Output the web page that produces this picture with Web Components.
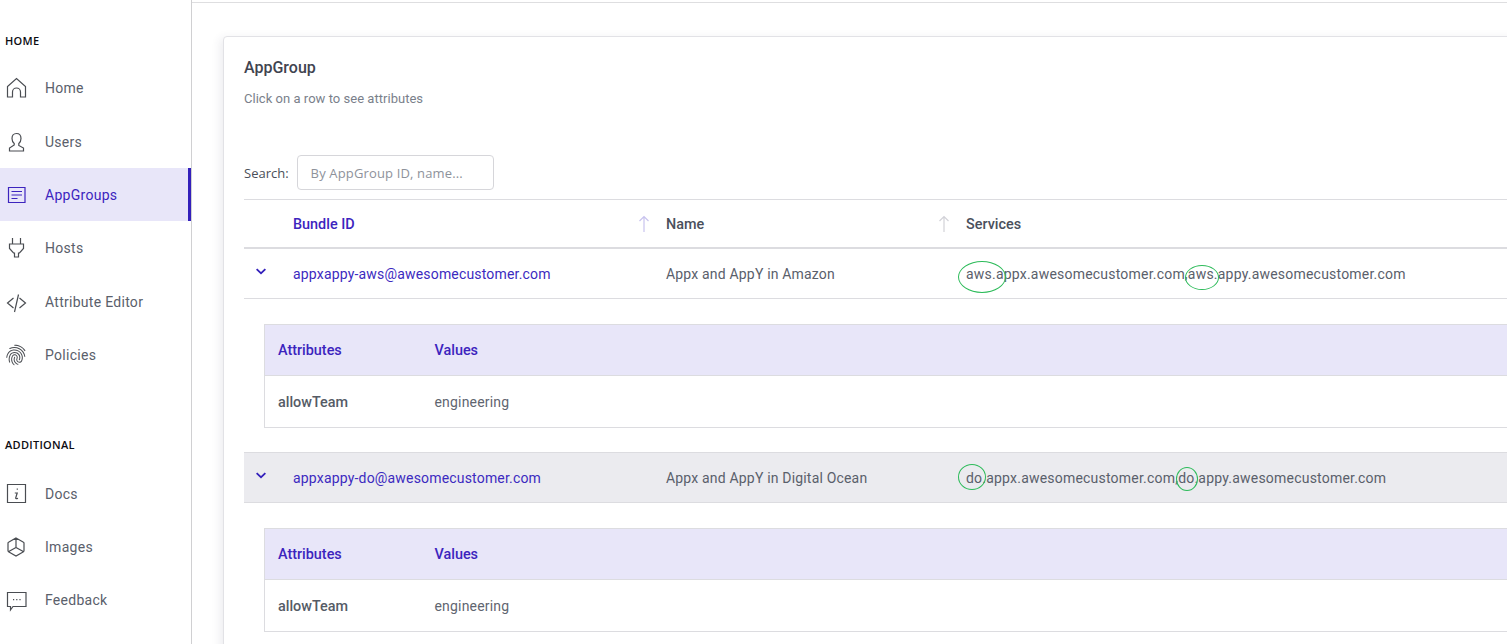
<!DOCTYPE html>
<html>
<head>
<meta charset="utf-8">
<title>AppGroup</title>
<style>
  html, body { margin: 0; height: 100%; overflow: hidden; background: #fff; }
  body { font-family: Roboto, "Liberation Sans", sans-serif; }
</style>
</head>
<body>
<app-shell>
  <side-nav slot="nav">
    <nav-heading>HOME</nav-heading>
    <nav-item>
      <svg slot="icon" viewBox="0 0 24 24"><path d="M3.500 21V10.500L12.500 2.500 21.500 10.500V21H16.500V16a4 4 0 0 0-8 0V21Z"/></svg>
      Home
    </nav-item>
    <nav-item>
      <svg slot="icon" viewBox="0 0 24 24"><path d="M12.500 3.500c-3 0-4.500 2.300-4.500 5 0 2.200 1 4 2.200 5v1.500L5.500 18v3h14v-3l-4.700-2.500V13.500c1.200-1 2.200-2.800 2.200-5 0-2.700-1.500-5-4.500-5z"/></svg>
      Users
    </nav-item>
    <nav-item active>
      <svg slot="icon" viewBox="0 0 24 24"><path d="M4.500 4.500h16.500v15H4.500zM7.500 8.500h10.500M7.500 12h10.500M7.500 15.500h6"/></svg>
      AppGroups
    </nav-item>
    <nav-item>
      <svg slot="icon" viewBox="0 0 24 24"><path d="M8.500 2v6M16.500 2v6M5.500 8h14v4.500l-4 4.500h-1v4h-4v-4h-1l-4-4.500z"/></svg>
      Hosts
    </nav-item>
    <nav-item>
      <svg slot="icon" viewBox="0 0 24 24"><path d="M9.500 8l-6 5 6 5M15.500 8l6 5-6 5M14.500 4.500l-4 17.500"/></svg>
      Attribute Editor
    </nav-item>
    <nav-item>
      <svg slot="icon" viewBox="0 0 24 24"><g transform="rotate(28 12 12)"><path class="fill" d="M17.810 4.470c-.080 0-.160-.020-.230-.060C15.660 3.420 14 3 12.010 3c-1.980 0-3.860.470-5.580 1.410-.240.130-.540.040-.680-.200-.130-.240-.040-.550.200-.680C7.820 2.520 9.860 2 12.010 2c2.130 0 3.990.470 6.030 1.520.250.130.340.430.210.670-.090.180-.260.280-.440.280zM3.500 9.720c-.100 0-.200-.030-.290-.090-.230-.160-.280-.470-.120-.700.990-1.400 2.250-2.500 3.750-3.270C9.980 4.040 14 4.030 17.150 5.650c1.500.770 2.760 1.860 3.750 3.250.160.220.110.540-.120.700-.230.160-.540.110-.700-.120-.900-1.260-2.040-2.250-3.390-2.940-2.870-1.470-6.540-1.470-9.400.010-1.360.700-2.500 1.700-3.400 2.960-.080.140-.230.210-.390.210zm6.250 12.070c-.130 0-.260-.050-.350-.150-.870-.870-1.340-1.430-2.010-2.640-.690-1.230-1.050-2.730-1.050-4.340 0-2.970 2.540-5.390 5.660-5.390s5.660 2.420 5.660 5.390c0 .280-.220.500-.500.500s-.500-.220-.500-.500c0-2.420-2.090-4.390-4.660-4.390-2.570 0-4.660 1.970-4.660 4.390 0 1.440.320 2.770.930 3.850.640 1.150 1.080 1.640 1.850 2.420.190.200.190.510 0 .710-.110.100-.240.150-.370.150zm7.170-1.850c-1.190 0-2.240-.300-3.100-.890-1.490-1.010-2.380-2.650-2.380-4.390 0-.280.220-.500.500-.500s.500.220.500.500c0 1.410.720 2.740 1.940 3.560.710.480 1.540.710 2.540.710.240 0 .640-.030 1.040-.100.270-.050.530.130.580.410.050.270-.130.530-.410.580-.570.110-1.070.120-1.210.120zM14.910 22c-.040 0-.090-.010-.130-.020-1.590-.440-2.630-1.030-3.720-2.100-1.400-1.390-2.170-3.240-2.170-5.220 0-1.620 1.380-2.940 3.080-2.940 1.700 0 3.080 1.320 3.080 2.940 0 1.070.930 1.940 2.080 1.940s2.080-.870 2.080-1.940c0-3.770-3.250-6.830-7.250-6.830-2.840 0-5.440 1.580-6.610 4.030-.390.810-.590 1.760-.590 2.800 0 .780.070 2.010.670 3.610.100.260-.030.550-.290.640-.260.100-.550-.040-.640-.290-.490-1.310-.730-2.610-.730-3.960 0-1.200.230-2.290.680-3.240 1.330-2.790 4.280-4.600 7.510-4.600 4.550 0 8.250 3.510 8.250 7.830 0 1.620-1.380 2.940-3.080 2.940s-3.080-1.320-3.080-2.940c0-1.070-.930-1.940-2.080-1.940s-2.080.870-2.080 1.940c0 1.710.660 3.310 1.870 4.510.950.940 1.860 1.460 3.270 1.850.270.070.420.350.350.610-.050.230-.260.380-.470.380z"/></g></svg>
      Policies
    </nav-item>
    <nav-heading second>ADDITIONAL</nav-heading>
    <nav-item>
      <svg slot="icon" viewBox="0 0 24 24"><path d="M3.500 2.500h18v18h-18zM13.300 6.500v1.200M10.800 11h2.400l-1.500 5c-.200.800.800 1 2.300.200"/></svg>
      Docs
    </nav-item>
    <nav-item>
      <svg slot="icon" viewBox="0 0 24 24"><path d="M12 3l7.500 4.300c.400.200.500.500.500.900v7.600c0 .400-.100.700-.500.900L12 21l-7.500-4.300c-.400-.200-.500-.500-.500-.900V8.200c0-.400.100-.700.500-.900zM12 3v9.500M12 12.500l-7.700 4.300M12 12.500l7.700 4.300"/></svg>
      Images
    </nav-item>
    <nav-item>
      <svg slot="icon" viewBox="0 0 24 24"><path d="M3.500 4.500h18.500v14h-13l-2.500 3.500v-3.500h-3z"/><path class="fill" d="M9 11h1.200v1.200H9zM12.200 11h1.200v1.200h-1.200zM15.400 11h1.200v1.200h-1.200z"/></svg>
      Feedback
    </nav-item>
  </side-nav>

  <app-card heading="AppGroup" note="Click on a row to see attributes">
    <search-box label="Search:" placeholder="By AppGroup ID, name..."></search-box>
    <table-head></table-head>

    <group-row bundle="appxappy-aws@awesomecustomer.com" name="Appx and AppY in Amazon">
      <ring-mark style="--l:-8px;--t:-3px;--w:48px;--h:32px">aws.</ring-mark>appx.awesomecustomer.com,<ring-mark style="--l:-3px;--t:1px;--w:34px;--h:25px">aws.</ring-mark>appy.awesomecustomer.com
    </group-row>
    <attr-panel attr="allowTeam" value="engineering"></attr-panel>

    <group-row hover bundle="appxappy-do@awesomecustomer.com" name="Appx and AppY in Digital Ocean">
      <ring-mark style="--l:-8px;--t:-4px;--w:28px;--h:26px">do.</ring-mark>appx.awesomecustomer.com,<ring-mark style="--l:-2px;--t:-1px;--w:22px;--h:24px">do.</ring-mark>appy.awesomecustomer.com
    </group-row>
    <attr-panel attr="allowTeam" value="engineering"></attr-panel>
  </app-card>
</app-shell>

<script>
class AppShell extends HTMLElement {
  constructor() {
    super();
    this.attachShadow({ mode: "open" });
    this.shadowRoot.innerHTML = `
    <style>
      :host { display: flex; height: 644px; overflow: hidden; }
      .nav { display: block; flex: 0 0 192px; }
      main {
        flex: 1;
        min-width: 0;
        margin-top: 2px;
        border-top: 1px solid #dedee0;
        padding: 33px 0 0 31px;
        overflow: hidden;
      }
    </style>
    <div class="nav"><slot name="nav"></slot></div>
    <main><slot></slot></main>`;
  }
}

class SideNav extends HTMLElement {
  constructor() {
    super();
    this.attachShadow({ mode: "open" });
    this.shadowRoot.innerHTML = `
    <style>
      :host {
        display: block;
        box-sizing: border-box;
        width: 192px;
        height: 644px;
        border-right: 1px solid #d0d0d2;
        padding-top: 34px;
      }
    </style>
    <slot></slot>`;
  }
}

class NavHeading extends HTMLElement {
  constructor() {
    super();
    this.attachShadow({ mode: "open" });
    this.shadowRoot.innerHTML = `
    <style>
      :host {
        display: block;
        height: 14px;
        padding: 0 0 0 5px;
        margin-bottom: 13px;
        font: 600 11px/14px "Open Sans", sans-serif;
        letter-spacing: .3px;
        color: #0c0c12;
      }
      :host([second]) { margin-top: 57px; margin-bottom: 14px; }
    </style>
    <slot></slot>`;
  }
}

class NavItem extends HTMLElement {
  constructor() {
    super();
    this.attachShadow({ mode: "open" });
    this.shadowRoot.innerHTML = `
    <style>
      :host {
        display: flex;
        align-items: center;
        gap: 17px;
        box-sizing: border-box;
        height: 53.400px;
        padding: 1px 0 0 4px;
        font: 400 14px/20px Roboto, sans-serif;
        letter-spacing: .28px;
        color: #5a606b;
      }
      :host([active]) {
        background: #e8e6f9;
        color: #3c24be;
        border-right: 3px solid #3320bb;
      }
      ::slotted(svg) {
        flex: none;
        width: 24px;
        height: 24px;
        fill: none;
        stroke: #4a4d52;
        stroke-width: 1.200;
      }
      :host([active]) ::slotted(svg) { stroke: #3c24be; }
    </style>
    <slot name="icon"></slot>
    <span><slot></slot></span>`;
  }

  connectedCallback() {
    // the filled bits of an icon are marked with .fill, the rest is outline
    this.querySelectorAll(".fill").forEach(p => {
      p.setAttribute("fill", "#4a4d52");
      p.setAttribute("stroke", "none");
    });
  }
}

class AppCard extends HTMLElement {
  constructor() {
    super();
    this.attachShadow({ mode: "open" });
  }

  connectedCallback() {
    this.shadowRoot.innerHTML = `
    <style>
      :host {
        display: block;
        box-sizing: border-box;
        width: 1400px;
        height: 900px;
        padding: 21px 20px;
        background: #fff;
        border: 1px solid #e2e2e6;
        border-radius: 4px;
        box-shadow: -3px 2px 10px rgba(60, 60, 90, .09);
      }
      h2 {
        margin: 0;
        font: 500 16px/20px Roboto, sans-serif;
        color: #3f4450;
      }
      p {
        margin: 12px 0 0;
        font: 400 13px/18px Roboto, sans-serif;
        letter-spacing: .03px;
        color: #7a7f8b;
      }
      .body { margin-top: 47px; width: 1263px; }
    </style>
    <h2>${this.getAttribute("heading")}</h2>
    <p>${this.getAttribute("note")}</p>
    <div class="body"><slot></slot></div>`;
  }
}

class SearchBox extends HTMLElement {
  constructor() {
    super();
    this.attachShadow({ mode: "open" });
  }

  connectedCallback() {
    this.shadowRoot.innerHTML = `
    <style>
      :host {
        display: flex;
        align-items: center;
        gap: 8px;
        height: 35px;
        margin-bottom: 9px;
        font: 400 13px/18px "Open Sans", sans-serif;
        color: #4a4f59;
      }
      input {
        box-sizing: border-box;
        width: 197px;
        height: 35px;
        padding: 0 13px;
        border: 1px solid #d6d6da;
        border-radius: 4px;
        font: inherit;
        letter-spacing: .15px;
        outline: none;
      }
      input::placeholder { color: #8e929b; opacity: 1; }
    </style>
    <span>${this.getAttribute("label")}</span>
    <input placeholder="${this.getAttribute("placeholder")}">`;
  }
}

// shared columns of the head and the rows
const rowColumns = "49px 373px 299px 1fr";

class TableHead extends HTMLElement {
  constructor() {
    super();
    this.attachShadow({ mode: "open" });
    this.shadowRoot.innerHTML = `
    <style>
      :host {
        display: grid;
        grid-template-columns: ${rowColumns};
        align-items: center;
        box-sizing: border-box;
        height: 50px;
        padding-top: 2px;
        border-top: 1px solid #dcdce0;
        border-bottom: 2px solid #dcdce0;
        font: 500 14.400px/20px Roboto, sans-serif;
        color: #4a505c;
      }
      .cell { display: flex; align-items: center; justify-content: space-between; padding-right: 15px; }
      .name { padding-right: 14px; }
      .svc { padding-left: 1px; }
      .sel { color: #3c24be; }
      svg { width: 14px; height: 18px; margin-top: -2px; fill: none; stroke: #d2d2d8; stroke-width: 1.200; }
      .sel svg { stroke: #c8c3ee; }
    </style>
    <span></span>
    <div class="cell sel">Bundle ID
      <svg viewBox="0 0 14 18"><path d="M7 17V1.500M2.500 6L7 1.500 11.500 6"/></svg>
    </div>
    <div class="cell name">Name
      <svg viewBox="0 0 14 18"><path d="M7 17V1.500M2.500 6L7 1.500 11.500 6"/></svg>
    </div>
    <div class="cell svc">Services</div>`;
  }
}

class GroupRow extends HTMLElement {
  constructor() {
    super();
    this.attachShadow({ mode: "open" });
  }

  connectedCallback() {
    this.shadowRoot.innerHTML = `
    <style>
      :host {
        display: grid;
        grid-template-columns: ${rowColumns};
        align-items: center;
        box-sizing: border-box;
        height: 50px;
        padding-top: 1px;
        border-bottom: 1px solid #dcdce0;
        font: 400 14px/20px Roboto, sans-serif;
        letter-spacing: .18px;
        color: #5a606b;
      }
      :host([hover]) { background: #ebebef; border-top: 1px solid #dcdce0; height: 51px; }
      svg { width: 10px; height: 7px; margin: 0 0 6px 12px; fill: #3320bb; }
      .id { color: #3c2ac0; }
      .svc { white-space: nowrap; padding-left: 1px; letter-spacing: .21px; }
    </style>
    <svg viewBox="0 0 12 8"><path d="M1.500 0.500L6 4.500 10.500 0.500 12 2 6 7.500 0 2z"/></svg>
    <span class="id">${this.getAttribute("bundle")}</span>
    <span>${this.getAttribute("name")}</span>
    <span class="svc"><slot></slot></span>`;
  }
}

class RingMark extends HTMLElement {
  constructor() {
    super();
    this.attachShadow({ mode: "open" });
    this.shadowRoot.innerHTML = `
    <style>
      :host { display: inline-block; position: relative; }
      i {
        position: absolute;
        left: var(--l);
        top: var(--t);
        width: var(--w);
        height: var(--h);
        box-sizing: border-box;
        border: 1.200px solid #2dbb5a;
        border-radius: 50%;
      }
    </style>
    <slot></slot><i></i>`;
  }
}

class AttrPanel extends HTMLElement {
  constructor() {
    super();
    this.attachShadow({ mode: "open" });
  }

  connectedCallback() {
    this.shadowRoot.innerHTML = `
    <style>
      :host {
        display: block;
        box-sizing: border-box;
        margin: 25px 0 24px 20px;
        border: 1px solid #dcdce0;
        border-right: 0;
        font: 400 14.400px/20px Roboto, sans-serif;
      }
      .line {
        display: grid;
        grid-template-columns: 156.500px 1fr;
        align-items: center;
        box-sizing: border-box;
        height: 51px;
        padding: 2px 0 0 13px;
      }
      .top {
        height: 51px;
        padding-top: 2px;
        background: #e8e6f9;
        border-bottom: 1px solid #dcdce0;
        font-weight: 500;
        color: #3c24be;
      }
      b { font-weight: 500; color: #555b66; }
      span { color: #5f6570; font-size: 14px; letter-spacing: .18px; margin-top: -1px; }
    </style>
    <div class="line top"><div>Attributes</div><div>Values</div></div>
    <div class="line"><b>${this.getAttribute("attr")}</b><span>${this.getAttribute("value")}</span></div>`;
  }
}

customElements.define("app-shell", AppShell);
customElements.define("side-nav", SideNav);
customElements.define("nav-heading", NavHeading);
customElements.define("nav-item", NavItem);
customElements.define("app-card", AppCard);
customElements.define("search-box", SearchBox);
customElements.define("table-head", TableHead);
customElements.define("group-row", GroupRow);
customElements.define("ring-mark", RingMark);
customElements.define("attr-panel", AttrPanel);
</script>
</body>
</html>
